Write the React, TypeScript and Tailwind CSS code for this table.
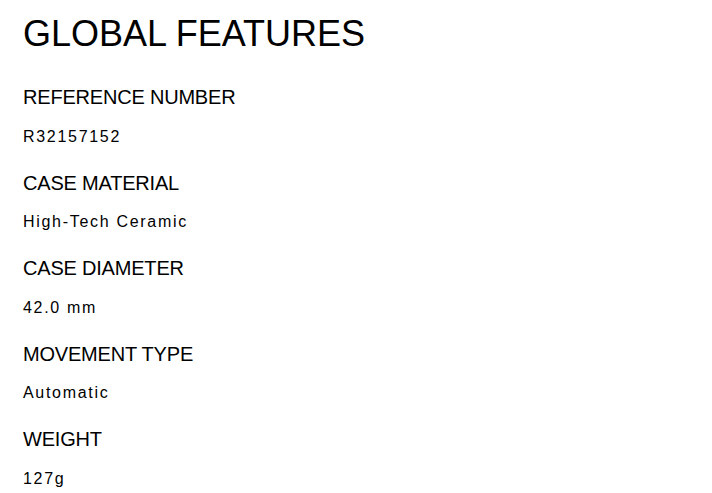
const specs = [
  { label: "REFERENCE NUMBER", value: "R32157152" },
  { label: "CASE MATERIAL", value: "High-Tech Ceramic" },
  { label: "CASE DIAMETER", value: "42.0 mm" },
  { label: "MOVEMENT TYPE", value: "Automatic" },
  { label: "WEIGHT", value: "127g" },
];

export default function App() {
  return (
    <div className="min-h-screen bg-white px-[23px] pt-[14px] text-black font-['Liberation_Sans',Arial,sans-serif]">
      <h1 className="text-[36px] leading-[40px]">GLOBAL FEATURES</h1>
      <dl className="mt-[29px] flex flex-col">
        {specs.map((s) => (
          <div key={s.label} className="mb-[20px]">
            <dt className="text-[20px] leading-[28px] tracking-[-0.2px]">{s.label}</dt>
            <dd className="mt-[13.5px] text-[16px] leading-[24px] tracking-[1.7px]">{s.value}</dd>
          </div>
        ))}
      </dl>
    </div>
  );
}
